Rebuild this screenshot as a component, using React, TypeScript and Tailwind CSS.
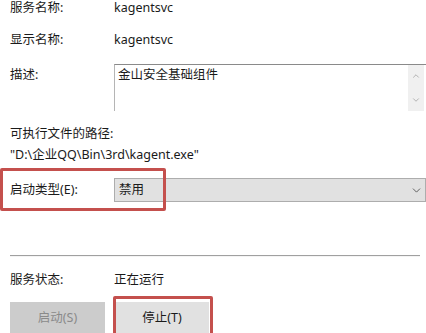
import { ChevronDown, ChevronUp } from 'lucide-react';

const font = { fontFamily: '"Noto Sans", "Noto Sans CJK SC", sans-serif' };

function Row({ label, children, className = '' }: { label: string; children?: React.ReactNode; className?: string }) {
  return (
    <div className={`flex items-center ${className}`}>
      <div className="w-[114px] pl-[10px] shrink-0">{label}</div>
      <div>{children}</div>
    </div>
  );
}

export default function App() {
  return (
    <div
      className="relative w-[426px] h-[333px] overflow-hidden bg-white text-[12.5px] leading-none text-[#1a1a1a]"
      style={font}
    >
      <Row label="服务名称:" className="h-[16px]">
        kagentsvc
      </Row>
      <Row label="显示名称:" className="h-[16px] mt-[16px]">
        kagentsvc
      </Row>

      <div className="flex mt-[16px] h-[47px]">
        <div className="w-[114px] pl-[10px] shrink-0 pt-[5px]">描述:</div>
        <div className="flex-1 flex border-t border-t-[#8a8a8a] border-l border-l-[#b5b5b5]">
          <div className="flex-1 pl-[3px] pt-[4px]">金山安全基础组件</div>
          <div className="w-[16px] mr-[2px] bg-[#f0f0f0] flex flex-col items-center justify-between py-[6px] text-[#a6a6a6]">
            <ChevronUp size={10} strokeWidth={2} />
            <ChevronDown size={10} strokeWidth={2} />
          </div>
        </div>
      </div>

      <div className="pl-[10px] mt-[17px]">可执行文件的路径:</div>
      <div className="pl-[10px] mt-[8px]">"D:\企业QQ\Bin\3rd\kagent.exe"</div>

      <div className="flex items-center mt-[17px] h-[24px]">
        <div className="w-[114px] pl-[10px] shrink-0">启动类型(E):</div>
        <div className="flex-1 h-full flex items-center justify-between bg-[#e1e1e1] border border-[#adadad] pl-[4px] pr-[2px]">
          <span>禁用</span>
          <ChevronDown size={13} strokeWidth={1.5} className="text-[#444]" />
        </div>
      </div>

      <div className="mx-[10px] mt-[53px] border-t border-t-[#a0a0a0] border-b border-b-[#f4f4f4] w-[410px]" />

      <Row label="服务状态:" className="h-[16px] mt-[15px]">
        正在运行
      </Row>

      <div className="flex mt-[14px] pl-[10px] gap-[10px]">
        <button className="w-[95px] h-[32px] bg-[#cccccc] text-[#8a8a8a] flex items-center justify-center">
          启动(S)
        </button>
        <button className="w-[94px] h-[32px] bg-[#e1e1e1] flex items-center justify-center">
          停止(T)
        </button>
      </div>

      {/* annotation boxes */}
      <div className="absolute left-0 top-[168px] w-[166px] h-[43px] border-[3px] border-[#c4504d] rounded-[2px]" />
      <div className="absolute left-[113px] top-[296px] w-[100px] h-[40px] border-[3px] border-[#c4504d] rounded-[2px]" />
    </div>
  );
}
